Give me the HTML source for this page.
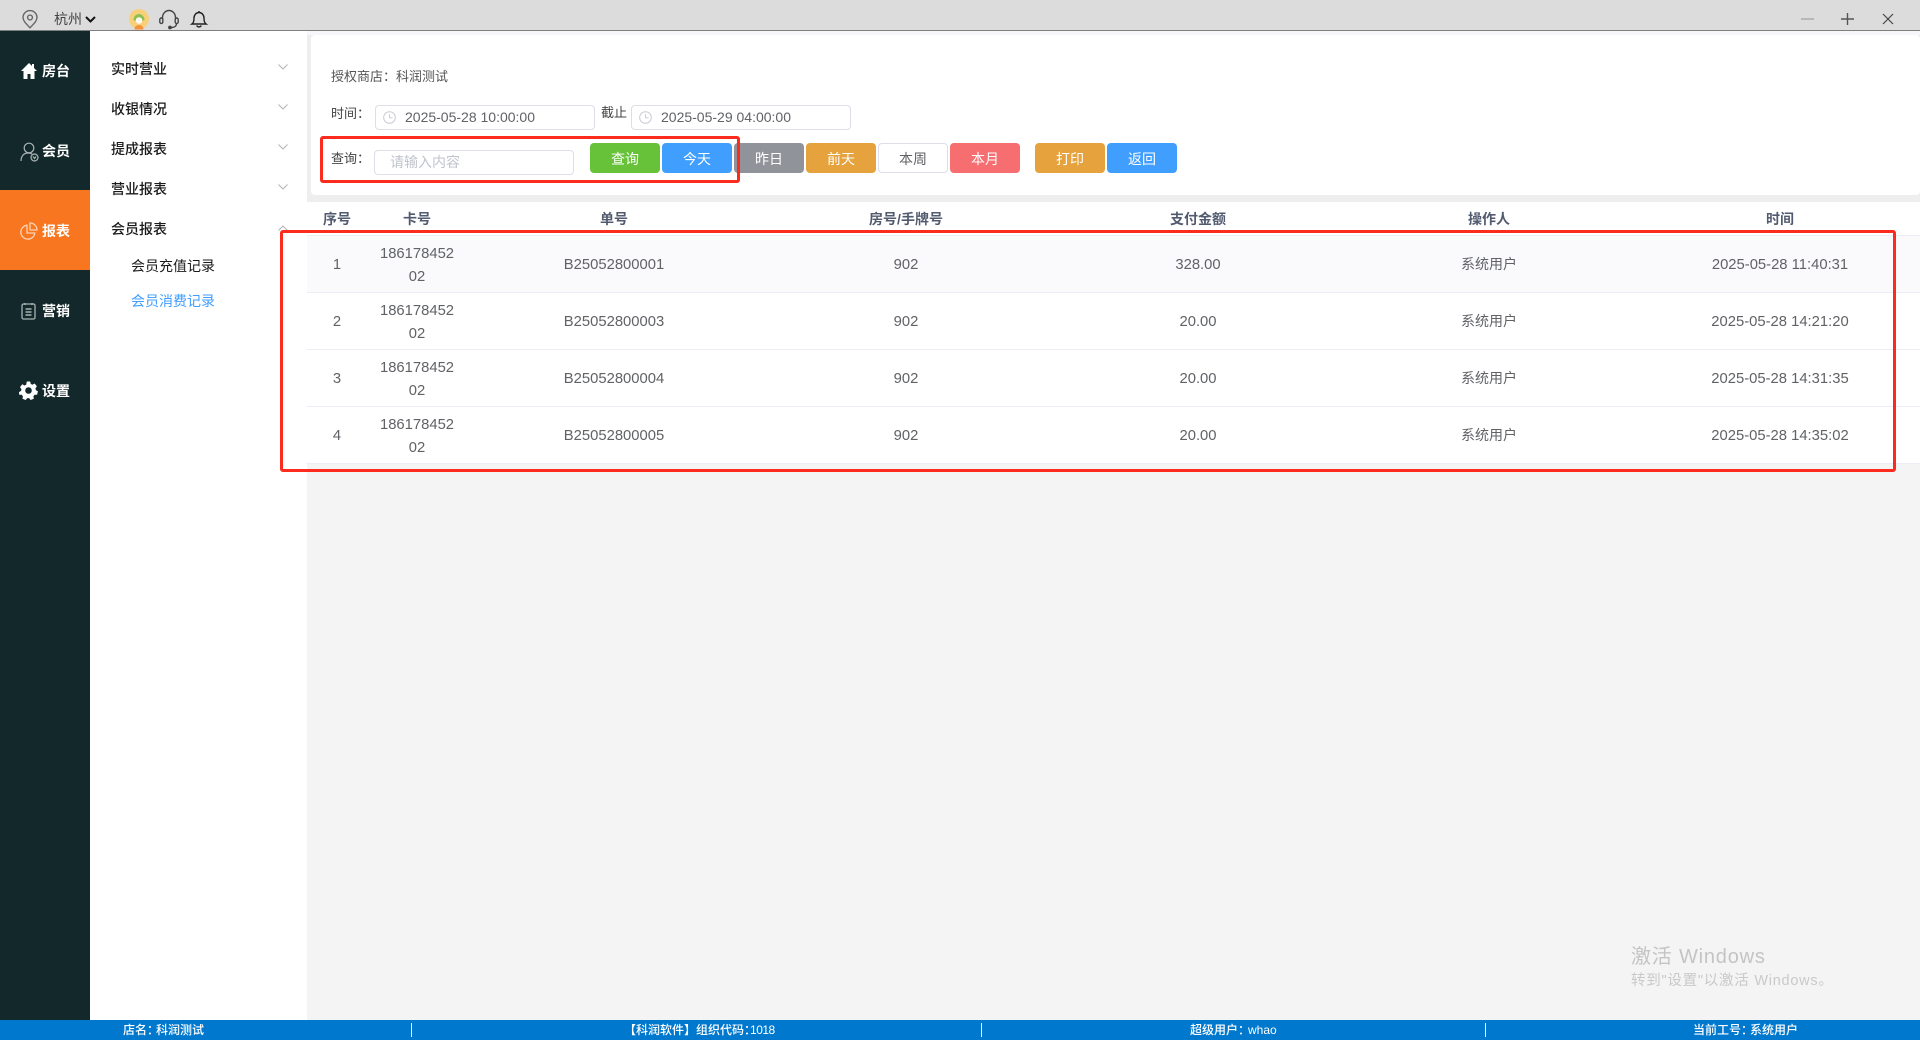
<!DOCTYPE html>
<html lang="zh-CN">
<head>
<meta charset="utf-8">
<title>会员消费记录</title>
<style>
html,body{margin:0;padding:0;width:1920px;height:1040px;overflow:hidden;background:#f4f4f5;}
body{position:relative;font-family:"Liberation Sans","Noto Sans CJK SC",sans-serif;font-size:14px;color:#606266;}
.a{position:absolute;white-space:nowrap;}
.t{position:absolute;white-space:nowrap;line-height:20px;height:20px;}
.c{position:absolute;white-space:nowrap;line-height:20px;height:20px;transform:translateX(-50%);text-align:center;}
.n{font-size:14.800px;margin-top:1px;}
.nav{position:absolute;left:42px;font-weight:700;color:#fff;font-size:14px;line-height:20px;white-space:nowrap;}
.menu{position:absolute;left:111px;color:#1a1a1a;font-size:14px;line-height:20px;font-weight:500;white-space:nowrap;}
.btn{position:absolute;top:143px;width:70px;height:30px;border-radius:4px;color:#fff;text-align:center;line-height:32px;font-size:14px;box-sizing:border-box;}
.inp{position:absolute;background:#fff;border:1px solid #dcdfe6;border-radius:4px;box-sizing:border-box;}
.row{position:absolute;left:307px;width:1613px;height:57px;background:#fff;border-bottom:1px solid #ebeef5;box-sizing:border-box;}
.h{font-weight:700;color:#515a6e;}
.sep{position:absolute;top:1023px;width:1px;height:14px;background:#fff;}
.st{position:absolute;top:1020px;height:20px;line-height:20px;color:#fff;font-size:12px;white-space:nowrap;font-weight:500;}
svg{position:absolute;overflow:visible;}
</style>
</head>
<body>
<!-- top bar -->
<div class="a" style="left:0;top:0;width:1920px;height:30px;background:#dcdcdc;"></div>
<div class="a" style="left:0;top:30px;width:1920px;height:1px;background:#7f7f7f;"></div>
<svg style="left:22px;top:10px" width="16" height="19" viewBox="0 0 16 19" fill="none" stroke="#666" stroke-width="1.4"><path d="M8 17.8C4.5 14 1 11 1 7.4A7 6.8 0 0 1 15 7.4C15 11 11.500 14 8 17.800Z"/><circle cx="8" cy="7.500" r="2.400"/></svg>
<div class="t" style="left:54px;top:9px;color:#444;">杭州</div>
<svg style="left:85px;top:16px" width="11" height="7" viewBox="0 0 11 7" fill="none" stroke="#111" stroke-width="2"><path d="M1 1l4.500 4.500L10 1"/></svg>
<svg style="left:129px;top:9px" width="20" height="21" viewBox="0 0 20 21"><circle cx="10" cy="10" r="10" fill="#f8d07a"/><path d="M4.500 11a5.500 6 0 0 1 11 0l-2 1H6.500z" fill="#8cc152"/><circle cx="10" cy="11.500" r="3.300" fill="#fff8f0"/><path d="M5.500 20.500c0-6 9-6 9 0z" fill="#f6923a"/></svg>
<svg style="left:159px;top:9px" width="20" height="21" viewBox="0 0 20 21" fill="none" stroke="#444" stroke-width="1.400"><path d="M3.500 10V8.500a6.500 7 0 0 1 13 0V10"/><rect x="0.800" y="9" width="3" height="5.500" rx="1.500"/><rect x="16.200" y="9" width="3" height="5.500" rx="1.500"/><path d="M17.500 14.500c0 2.500-2 4-5 4"/><circle cx="11" cy="18.500" r="1.200" fill="#444"/></svg>
<svg style="left:191px;top:10px" width="16" height="18" viewBox="0 0 16 18" fill="none" stroke="#222" stroke-width="1.400"><path d="M1 14c1.500-1 2-2.500 2-6a5 5.500 0 0 1 10 0c0 3.500.5 5 2 6z"/><path d="M8 1v1.500"/><path d="M5.800 15.500a2.300 2 0 0 0 4.400 0"/></svg>
<svg style="left:1800px;top:13px" width="100" height="12" viewBox="0 0 100 12" fill="none"><path d="M1 6h13" stroke="#a8a8a8" stroke-width="1.400"/><path d="M41 6h13M47.500 0v12" stroke="#555" stroke-width="1.400"/><path d="M83 1l10 10M93 1L83 11" stroke="#444" stroke-width="1.200"/></svg>

<!-- left nav -->
<div class="a" style="left:0;top:31px;width:90px;height:989px;background:#13282a;"></div>
<div class="a" style="left:0;top:190px;width:90px;height:80px;background:#f7761f;"></div>
<svg style="left:20px;top:62px" width="18" height="18" viewBox="0 0 18 18"><path d="M9 1L1 9h2.500v8h4v-5h3v5h4V9H17l-3-3V2h-2v2z" fill="#fff"/></svg>
<div class="nav" style="top:61px">房台</div>
<svg style="left:20px;top:142px" width="20" height="20" viewBox="0 0 20 20" fill="none" stroke="#a9b4b5" stroke-width="1.200"><circle cx="9" cy="6" r="4.800"/><path d="M1 19c0-5 3-8 7-8 1.500 0 3 .3 4 1"/><circle cx="14.500" cy="15.500" r="3.500"/><path d="M13 14.500l1.500 2 1.500-2"/></svg>
<div class="nav" style="top:141px">会员</div>
<svg style="left:20px;top:222px" width="18" height="18" viewBox="0 0 18 18" fill="none" stroke="#fbd3b5" stroke-width="1.300"><path d="M7 3.200A7 7 0 1 0 14.800 11H7z"/><path d="M10 1a7 7 0 0 1 7 7h-7z"/></svg>
<div class="nav" style="top:221px">报表</div>
<svg style="left:21px;top:302px" width="15" height="18" viewBox="0 0 15 18" fill="none" stroke="#a9b4b5" stroke-width="1.300"><rect x="1" y="2" width="13" height="15" rx="1.500"/><path d="M4 1v2M11 1v2"/><path d="M4.500 7h6M4.500 10h6M4.500 13h6" stroke-width="1.500"/></svg>
<div class="nav" style="top:301px">营销</div>
<svg style="left:19px;top:381px" width="19" height="19" viewBox="0 0 19 19"><path fill="#fff" fill-rule="evenodd" d="M7.800.5h3.400l.5 2.400 1.700.8 2.200-1.200 2.300 2.800-1.400 2 .3 1.800 2.100 1.200-.8 3.400-2.500.1-1.200 1.500.4 2.400-3.200 1.300-1.500-1.900h-1.900l-1.500 1.900-3.200-1.300.4-2.400-1.200-1.500-2.500-.1L0 11.100l2.100-1.200.3-1.800-1.400-2 2.300-2.800 2.200 1.200 1.700-.8zM9.500 6.200a3.300 3.300 0 1 0 0 6.600 3.300 3.300 0 0 0 0-6.600z"/></svg>
<div class="nav" style="top:381px">设置</div>

<!-- sub menu -->
<div class="a" style="left:90px;top:31px;width:217px;height:989px;background:#fff;"></div>
<div class="menu" style="top:59px">实时营业</div>
<div class="menu" style="top:99px">收银情况</div>
<div class="menu" style="top:139px">提成报表</div>
<div class="menu" style="top:179px">营业报表</div>
<div class="menu" style="top:219px">会员报表</div>
<svg style="left:278px;top:64px" width="10" height="6" viewBox="0 0 10 6" fill="none" stroke="#b0b3b8"><path d="M.5.500L5 5 9.500.500"/></svg>
<svg style="left:278px;top:104px" width="10" height="6" viewBox="0 0 10 6" fill="none" stroke="#b0b3b8"><path d="M.5.500L5 5 9.500.500"/></svg>
<svg style="left:278px;top:144px" width="10" height="6" viewBox="0 0 10 6" fill="none" stroke="#b0b3b8"><path d="M.5.500L5 5 9.500.500"/></svg>
<svg style="left:278px;top:184px" width="10" height="6" viewBox="0 0 10 6" fill="none" stroke="#b0b3b8"><path d="M.5.500L5 5 9.500.500"/></svg>
<svg style="left:278px;top:225px" width="10" height="6" viewBox="0 0 10 6" fill="none" stroke="#b0b3b8"><path d="M.5 5.500L5 1l4.500 4.500"/></svg>
<div class="menu" style="left:131px;top:256px;font-weight:400;">会员充值记录</div>
<div class="menu" style="left:131px;top:291px;font-weight:400;color:#409eff;">会员消费记录</div>

<!-- content card -->
<div class="a" style="left:307px;top:31px;width:1613px;height:171px;background:#eeeeef;"></div>
<div class="a" style="left:307px;top:31px;width:1613px;height:4px;background:#f7f7fb;"></div>
<div class="a" style="left:311px;top:35px;width:1609px;height:160px;background:#fff;border-radius:4px;"></div>

<div class="t" style="left:331px;top:67px;font-size:13px;color:#555;">授权商店：科润测试</div>
<div class="t" style="left:331px;top:104px;font-size:13px;color:#444;">时间：</div>
<div class="inp" style="left:375px;top:105px;width:220px;height:25px;"></div>
<svg style="left:383px;top:111px" width="13" height="13" viewBox="0 0 13 13" fill="none" stroke="#c9ccd2" stroke-width="1"><circle cx="6.500" cy="6.500" r="5.800"/><path d="M6.500 3v3.700h3"/></svg>
<div class="t" style="left:405px;top:107px;color:#606266;">2025-05-28 10:00:00</div>
<div class="t" style="left:601px;top:103px;font-size:13px;color:#444;">截止</div>
<div class="inp" style="left:631px;top:105px;width:220px;height:25px;"></div>
<svg style="left:639px;top:111px" width="13" height="13" viewBox="0 0 13 13" fill="none" stroke="#c9ccd2" stroke-width="1"><circle cx="6.500" cy="6.500" r="5.800"/><path d="M6.500 3v3.700h3"/></svg>
<div class="t" style="left:661px;top:107px;color:#606266;">2025-05-29 04:00:00</div>

<div class="t" style="left:331px;top:149px;font-size:13px;color:#444;">查询：</div>
<div class="inp" style="left:374px;top:150px;width:200px;height:25px;"></div>
<div class="t" style="left:390px;top:152px;color:#c0c4cc;">请输入内容</div>

<div class="btn" style="left:590px;background:#67c23a;">查询</div>
<div class="btn" style="left:662px;background:#409eff;">今天</div>
<div class="btn" style="left:734px;background:#909399;">昨日</div>
<div class="btn" style="left:806px;background:#e6a23c;">前天</div>
<div class="btn" style="left:878px;background:#fff;border:1px solid #dcdfe6;color:#606266;line-height:30px;">本周</div>
<div class="btn" style="left:950px;background:#f76e70;">本月</div>
<div class="btn" style="left:1035px;background:#e6a23c;">打印</div>
<div class="btn" style="left:1107px;background:#409eff;">返回</div>

<!-- table -->
<div class="a" style="left:307px;top:202px;width:1613px;height:34px;background:#fff;border-bottom:1px solid #ebeef5;box-sizing:border-box;"></div>
<div class="c h" style="left:337px;top:209px">序号</div>
<div class="c h" style="left:417px;top:209px">卡号</div>
<div class="c h" style="left:614px;top:209px">单号</div>
<div class="c h" style="left:906px;top:209px">房号/手牌号</div>
<div class="c h" style="left:1198px;top:209px">支付金额</div>
<div class="c h" style="left:1489px;top:209px">操作人</div>
<div class="c h" style="left:1780px;top:209px">时间</div>

<div class="row" style="top:236px;background:#fafafc;"></div>
<div class="row" style="top:293px;"></div>
<div class="row" style="top:350px;"></div>
<div class="row" style="top:407px;"></div>

<div class="c n" style="left:337px;top:254px">1</div>
<div class="c n" style="left:417px;top:243px">186178452</div>
<div class="c n" style="left:417px;top:266px">02</div>
<div class="c n" style="left:614px;top:254px">B25052800001</div>
<div class="c n" style="left:906px;top:254px">902</div>
<div class="c n" style="left:1198px;top:254px">328.00</div>
<div class="c" style="left:1489px;top:254px">系统用户</div>
<div class="c n" style="left:1780px;top:254px">2025-05-28 11:40:31</div>

<div class="c n" style="left:337px;top:311px">2</div>
<div class="c n" style="left:417px;top:300px">186178452</div>
<div class="c n" style="left:417px;top:323px">02</div>
<div class="c n" style="left:614px;top:311px">B25052800003</div>
<div class="c n" style="left:906px;top:311px">902</div>
<div class="c n" style="left:1198px;top:311px">20.00</div>
<div class="c" style="left:1489px;top:311px">系统用户</div>
<div class="c n" style="left:1780px;top:311px">2025-05-28 14:21:20</div>

<div class="c n" style="left:337px;top:368px">3</div>
<div class="c n" style="left:417px;top:357px">186178452</div>
<div class="c n" style="left:417px;top:380px">02</div>
<div class="c n" style="left:614px;top:368px">B25052800004</div>
<div class="c n" style="left:906px;top:368px">902</div>
<div class="c n" style="left:1198px;top:368px">20.00</div>
<div class="c" style="left:1489px;top:368px">系统用户</div>
<div class="c n" style="left:1780px;top:368px">2025-05-28 14:31:35</div>

<div class="c n" style="left:337px;top:425px">4</div>
<div class="c n" style="left:417px;top:414px">186178452</div>
<div class="c n" style="left:417px;top:437px">02</div>
<div class="c n" style="left:614px;top:425px">B25052800005</div>
<div class="c n" style="left:906px;top:425px">902</div>
<div class="c n" style="left:1198px;top:425px">20.00</div>
<div class="c" style="left:1489px;top:425px">系统用户</div>
<div class="c n" style="left:1780px;top:425px">2025-05-28 14:35:02</div>

<!-- red annotations -->
<div class="a" style="left:320px;top:136px;width:420px;height:47px;border:3px solid #fb2b1d;border-radius:3px;box-sizing:border-box;"></div>
<div class="a" style="left:280px;top:230px;width:1616px;height:242px;border:3px solid #fb2b1d;border-radius:3px;box-sizing:border-box;"></div>

<!-- watermark -->
<div class="t" style="left:1631px;top:945px;height:24px;line-height:24px;font-size:20px;letter-spacing:.8px;color:#c4c4c4;">激活 Windows</div>
<div class="t" style="left:1631px;top:971px;font-size:14.500px;letter-spacing:.75px;color:#c9c9c9;">转到"设置"以激活 Windows。</div>

<!-- status bar -->
<div class="a" style="left:0;top:1020px;width:1920px;height:20px;background:#0078ce;"></div>
<div class="st" style="left:123px;">店名：<span style="margin-left:-3px">科润测试</span></div>
<div class="sep" style="left:411px;"></div>
<div class="st" style="left:624px;">【科润软件】组织代码：<span style="margin-left:-6px;letter-spacing:-.5px">1018</span></div>
<div class="sep" style="left:981px;"></div>
<div class="st" style="left:1190px;">超级用户：<span style="margin-left:-2px">whao</span></div>
<div class="sep" style="left:1485px;"></div>
<div class="st" style="left:1693px;">当前工号：<span style="margin-left:-3px">系统用户</span></div>
</body>
</html>
